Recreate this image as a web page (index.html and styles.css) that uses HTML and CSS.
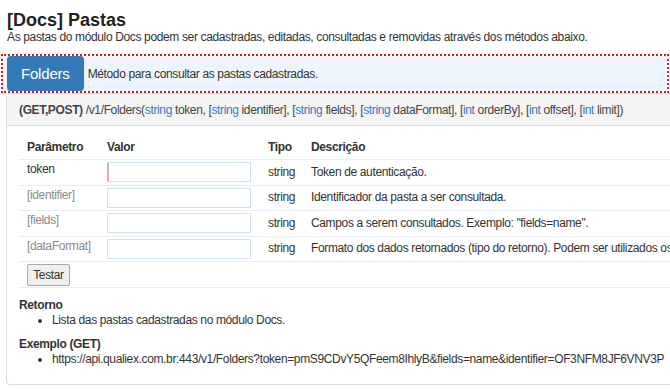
FILE: index.html
```html
<!DOCTYPE html>
<html lang="pt-BR">
<head>
<meta charset="utf-8">
<title>[Docs] Pastas</title>
<link rel="stylesheet" href="styles.css">
</head>
<body>
<h1 class="title">[Docs] Pastas</h1>
<p class="subtitle">As pastas do módulo Docs podem ser cadastradas, editadas, consultadas e removidas através dos métodos abaixo.</p>

<div class="method">
  <span class="method-btn">Folders</span>
  <span class="method-desc">Método para consultar as pastas cadastradas.</span>
</div>

<div class="panel">
  <div class="panel-heading"><b>(GET,POST)</b> /v1/Folders(<span class="kw">string</span> token, [<span class="kw">string</span> identifier], [<span class="kw">string</span> fields], [<span class="kw">string</span> dataFormat], [<span class="kw">int</span> orderBy], [<span class="kw">int</span> offset], [<span class="kw">int</span> limit])</div>
  <div class="panel-body">
    <table class="params">
      <colgroup>
        <col class="c-param"><col class="c-value"><col class="c-type"><col class="c-desc">
      </colgroup>
      <thead>
        <tr><th>Parâmetro</th><th>Valor</th><th>Tipo</th><th>Descrição</th></tr>
      </thead>
      <tbody>
        <tr>
          <td class="pname">token</td>
          <td><input class="field required" type="text"></td>
          <td>string</td>
          <td>Token de autenticação.</td>
        </tr>
        <tr>
          <td class="pname optional">[identifier]</td>
          <td><input class="field" type="text"></td>
          <td>string</td>
          <td>Identificador da pasta a ser consultada.</td>
        </tr>
        <tr>
          <td class="pname optional">[fields]</td>
          <td><input class="field" type="text"></td>
          <td>string</td>
          <td>Campos a serem consultados. Exemplo: "fields=name".</td>
        </tr>
        <tr>
          <td class="pname optional">[dataFormat]</td>
          <td><input class="field" type="text"></td>
          <td>string</td>
          <td>Formato dos dados retornados (tipo do retorno). Podem ser utilizados os formatos "json" e "xml".</td>
        </tr>
        <tr class="actions">
          <td colspan="4"><button class="test-btn" type="button">Testar</button></td>
        </tr>
      </tbody>
    </table>

    <div class="section">
      <h4 class="section-title">Retorno</h4>
      <ul class="section-list">
        <li>Lista das pastas cadastradas no módulo Docs.</li>
      </ul>
    </div>
    <div class="section section-next">
      <h4 class="section-title">Exemplo (GET)</h4>
      <ul class="section-list">
        <li>https://api.qualiex.com.br:443/v1/Folders?token=pmS9CDvY5QFeem8IhlyB&amp;fields=name&amp;identifier=OF3NFM8JF6VNV3P</li>
      </ul>
    </div>
  </div>
</div>
</body>
</html>
```

FILE: styles.css
```css
html, body {
  overflow: hidden;
}
body {
  margin: 0;
  font-family: "Liberation Sans", Arial, sans-serif;
  font-size: 12px;
  letter-spacing: -0.36px;
  color: #333;
  background: #fff;
}
.title {
  margin: 11px 0 0 7px;
  font-size: 18px;
  line-height: 19px;
  font-weight: bold;
  letter-spacing: 0;
  color: #222;
}
.subtitle {
  margin: 0 0 0 7px;
  line-height: 14px;
}
.method {
  margin: 12px 3px 0 3px;
  height: 35px;
  background: #eef5fd;
  outline: 2px dotted #e8141b;
  display: flex;
  align-items: stretch;
}
.method-btn {
  margin-left: 4px;
  padding: 0 14px;
  background: #337ab7;
  color: #fff;
  font-size: 15px;
  letter-spacing: -0.2px;
  border-radius: 4px;
  display: flex;
  align-items: center;
}
.method-desc {
  margin-left: 4px;
  display: flex;
  align-items: center;
}
.panel {
  margin: 2px 0 0 6px;
  width: 1100px;
  border: 1px solid #ddd;
  border-radius: 4px;
}
.panel-heading {
  background: #f5f5f5;
  padding: 8px 12px 7px;
  line-height: 16px;
  border-bottom: 1px solid #ddd;
  color: #444;
  white-space: nowrap;
}
.kw {
  color: #3a75c8;
}
.panel-body {
  padding: 9px 12px 17px;
}
.params {
  border-collapse: collapse;
  table-layout: fixed;
  width: 1076px;
}
.c-param { width: 80px; }
.c-value { width: 161px; }
.c-type { width: 43px; }
.params th {
  text-align: left;
  font-weight: bold;
  padding: 4px 4px 3px 8px;
  line-height: 17px;
  border-bottom: 1px solid #e8eef4;
  white-space: nowrap;
}
.params td {
  padding: 2.25px 4px 2.25px 8px;
  line-height: 17px;
  border-bottom: 1px solid #e8eef4;
  vertical-align: middle;
  white-space: nowrap;
}
.params td.pname {
  vertical-align: top;
  padding-top: 1px;
}
.optional {
  color: #8a8a8a;
}
.field {
  display: block;
  box-sizing: border-box;
  width: 144px;
  height: 20px;
  margin: 0;
  border: 1px solid #cfe0f0;
  border-radius: 1px;
  background: #fff;
}
.field.required {
  border-left: 2px solid #f2a9a6;
}
.params tr.actions td {
  padding: 1.5px 8px;
}
.test-btn {
  display: block;
  width: 43px;
  height: 22px;
  padding: 0;
  font-family: "Liberation Sans", Arial, sans-serif;
  font-size: 12px;
  letter-spacing: -0.36px;
  color: #333;
  background: #efefef;
  border: 1px solid #a9a9a9;
  border-radius: 2px;
}
.section {
  margin-top: 9px;
}
.section-next {
  margin-top: 8px;
}
.section-title {
  margin: 0;
  font-size: 12px;
  font-weight: bold;
  line-height: 16px;
}
.section-list {
  margin: 0;
  padding-left: 33px;
  line-height: 15px;
}
```
